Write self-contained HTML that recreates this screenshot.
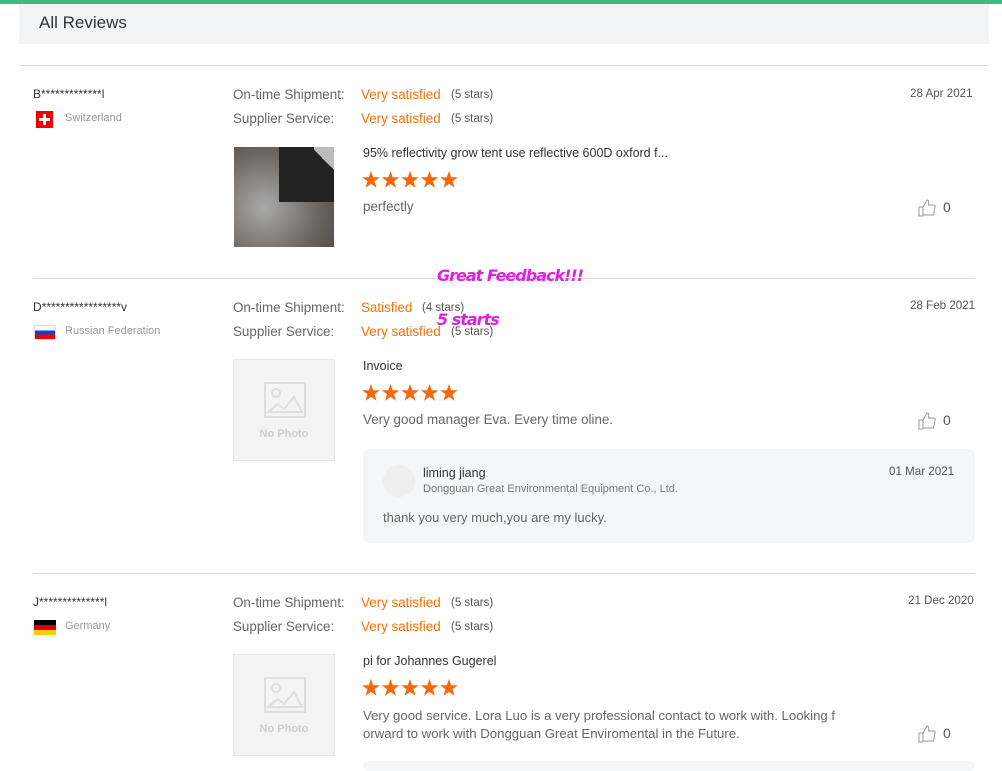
<!DOCTYPE html>
<html><head><meta charset="utf-8"><style>
*{margin:0;padding:0;box-sizing:border-box}
body{width:1002px;height:766px;overflow:hidden;background:#fff;font-family:"Liberation Sans",sans-serif;position:relative;color:#333}
.a{position:absolute;white-space:nowrap}
.lab{font-size:13.4px;color:#666}
.or{font-size:13.4px;color:#f5700a}
.st{font-size:11.5px;color:#555}
.gr{font-size:11px;color:#999}
.line{position:absolute;height:1px;background:#ddd}
.np{position:absolute;width:102px;height:102px;background:#f3f3f3;border:1px solid #e5e5e5}
.np svg{position:absolute;left:30px;top:22px}
.np span{position:absolute;left:0;right:0;top:68px;text-align:center;font-size:11px;color:#ccc;font-weight:bold}
.mg{font-family:"DejaVu Sans",sans-serif;font-weight:bold;font-style:italic;color:#e020e0;font-size:16px;letter-spacing:-1px}
.dt{font-size:11.6px;color:#555}
</style></head><body>
<svg width="0" height="0" style="position:absolute"><defs><path id="s" d="M9 0l2.2 6.3h6.6l-5.3 4 2 6.5L9 12.9l-5.5 3.9 2-6.5-5.3-4h6.6z" fill="#f5680a"/><g id="ss"><use href="#s"/><use href="#s" x="19.5"/><use href="#s" x="39"/><use href="#s" x="58.5"/><use href="#s" x="78"/></g>
<path id="th" d="M1 8h4v9H1zM5 8l4-7c2 0 2 2 1.5 5H16c1 0 1.5 1 1 2l-1.5 8H5" fill="none" stroke="#999" stroke-width="1"/></defs></svg>
<div class="a" style="left:0;top:0;width:1002px;height:4px;background:#3dbd7d"></div>
<div class="a" style="left:19px;top:4px;width:970px;height:40px;background:#f2f3f5"></div>
<div class="a" style="left:39px;top:13px;font-size:17px;color:#333">All Reviews</div>
<div class="line" style="left:19px;top:65px;width:970px"></div>

<!-- review 1 -->
<div class="a" style="left:33px;top:87px;font-size:12px;color:#333">B*************l</div>
<div class="a" style="left:36px;top:111px;width:17px;height:17px;background:#e00"><div style="position:absolute;left:7px;top:3px;width:3px;height:11px;background:#fff"></div><div style="position:absolute;left:3px;top:7px;width:11px;height:3px;background:#fff"></div></div>
<div class="a gr" style="left:65px;top:112px">Switzerland</div>
<div class="a lab" style="left:233px;top:87px">On-time Shipment:</div>
<div class="a or" style="left:361px;top:87px">Very satisfied</div>
<div class="a st" style="left:451px;top:89px">(5 stars)</div>
<div class="a lab" style="left:233px;top:111px">Supplier Service:</div>
<div class="a or" style="left:361px;top:111px">Very satisfied</div>
<div class="a st" style="left:451px;top:113px">(5 stars)</div>
<div class="a dt" style="left:910px;top:87px">28 Apr 2021</div>
<div class="a" style="left:234px;top:147px;width:100px;height:100px;background:radial-gradient(circle at 30% 60%,#aaa,#6a6560 60%,#4a4540)"><div style="position:absolute;left:45px;top:0;width:55px;height:55px;background:#222"></div><div style="position:absolute;left:80px;top:0;width:20px;height:26px;background:linear-gradient(45deg,#222 50%,#bbb 50%)"></div></div>
<div class="a" style="left:363px;top:146px;font-size:12.5px;color:#333">95% reflectivity grow tent use reflective 600D oxford f...</div>
<svg class="a" style="left:362px;top:171px" width="100" height="18"><use href="#ss"/></svg>
<div class="a" style="left:363px;top:199px;font-size:13.4px;color:#666">perfectly</div>
<svg class="a" style="left:918px;top:199px" width="18" height="18" viewBox="0 0 18 18"><use href="#th"/></svg>
<div class="a" style="left:943px;top:199px;font-size:14px;color:#555">0</div>

<div class="line" style="left:33px;top:278px;width:942px"></div>
<div class="a mg" style="left:437px;top:266px">Great Feedback!!!</div>

<!-- review 2 -->
<div class="a" style="left:33px;top:300px;font-size:12px;color:#333">D*****************v</div>
<div class="a" style="left:34px;top:325px;width:22px;height:15px;background:linear-gradient(#fff 33%,#1a3fb8 33% 66%,#e00 66%);border:1px solid #ddd"></div>
<div class="a gr" style="left:65px;top:325px">Russian Federation</div>
<div class="a lab" style="left:233px;top:300px">On-time Shipment:</div>
<div class="a or" style="left:361px;top:300px">Satisfied</div>
<div class="a st" style="left:422px;top:302px">(4 stars)</div>
<div class="a lab" style="left:233px;top:324px">Supplier Service:</div>
<div class="a or" style="left:361px;top:324px">Very satisfied</div>
<div class="a st" style="left:451px;top:326px">(5 stars)</div>
<div class="a mg" style="left:437px;top:310px">5 starts</div>
<div class="a dt" style="left:910px;top:299px">28 Feb 2021</div>
<div class="np" style="left:233px;top:359px"><svg width="42" height="36" viewBox="0 0 42 36"><rect x="1" y="1" width="40" height="34" fill="none" stroke="#ddd" stroke-width="2"/><circle cx="12" cy="11" r="4" fill="none" stroke="#ddd" stroke-width="2"/><path d="M4 30l10-8 6 5 10-12 8 15z" fill="none" stroke="#ddd" stroke-width="2"/></svg><span>No Photo</span></div>
<div class="a" style="left:363px;top:359px;font-size:12.5px;color:#333">Invoice</div>
<svg class="a" style="left:362px;top:384px" width="100" height="18"><use href="#ss"/></svg>
<div class="a" style="left:363px;top:412px;font-size:13.4px;color:#666">Very good manager Eva. Every time oline.</div>
<svg class="a" style="left:918px;top:412px" width="18" height="18" viewBox="0 0 18 18"><use href="#th"/></svg>
<div class="a" style="left:943px;top:412px;font-size:14px;color:#555">0</div>
<div class="a" style="left:363px;top:449px;width:612px;height:94px;background:#f5f6f7;border-radius:6px"></div>
<div class="a" style="left:383px;top:465px;width:32px;height:32px;border-radius:50%;background:#eee"></div>
<div class="a" style="left:423px;top:466px;font-size:12.5px;color:#333">liming jiang</div>
<div class="a" style="left:423px;top:483px;font-size:11px;color:#777">Dongguan Great Environmental Equipment Co., Ltd.</div>
<div class="a dt" style="left:889px;top:465px">01 Mar 2021</div>
<div class="a" style="left:383px;top:510px;font-size:13px;color:#666">thank you very much,you are my lucky.</div>

<div class="line" style="left:33px;top:573px;width:942px"></div>

<!-- review 3 -->
<div class="a" style="left:33px;top:595px;font-size:12px;color:#333">J**************l</div>
<div class="a" style="left:34px;top:620px;width:22px;height:15px;background:linear-gradient(#000 33%,#d00 33% 66%,#fc0 66%)"></div>
<div class="a gr" style="left:65px;top:620px">Germany</div>
<div class="a lab" style="left:233px;top:595px">On-time Shipment:</div>
<div class="a or" style="left:361px;top:595px">Very satisfied</div>
<div class="a st" style="left:451px;top:597px">(5 stars)</div>
<div class="a lab" style="left:233px;top:619px">Supplier Service:</div>
<div class="a or" style="left:361px;top:619px">Very satisfied</div>
<div class="a st" style="left:451px;top:621px">(5 stars)</div>
<div class="a dt" style="left:908px;top:594px">21 Dec 2020</div>
<div class="np" style="left:233px;top:654px"><svg width="42" height="36" viewBox="0 0 42 36"><rect x="1" y="1" width="40" height="34" fill="none" stroke="#ddd" stroke-width="2"/><circle cx="12" cy="11" r="4" fill="none" stroke="#ddd" stroke-width="2"/><path d="M4 30l10-8 6 5 10-12 8 15z" fill="none" stroke="#ddd" stroke-width="2"/></svg><span>No Photo</span></div>
<div class="a" style="left:363px;top:654px;font-size:12.5px;color:#333">pi for Johannes Gugerel</div>
<svg class="a" style="left:362px;top:679px" width="100" height="18"><use href="#ss"/></svg>
<div class="a" style="left:363px;top:707px;font-size:13.2px;color:#666;line-height:18px">Very good service. Lora Luo is a very professional contact to work with. Looking f<br>orward to work with Dongguan Great Enviromental in the Future.</div>
<svg class="a" style="left:918px;top:725px" width="18" height="18" viewBox="0 0 18 18"><use href="#th"/></svg>
<div class="a" style="left:943px;top:725px;font-size:14px;color:#555">0</div>
<div class="a" style="left:363px;top:761px;width:612px;height:10px;background:#f5f6f7;border-radius:6px"></div>
</body></html>
